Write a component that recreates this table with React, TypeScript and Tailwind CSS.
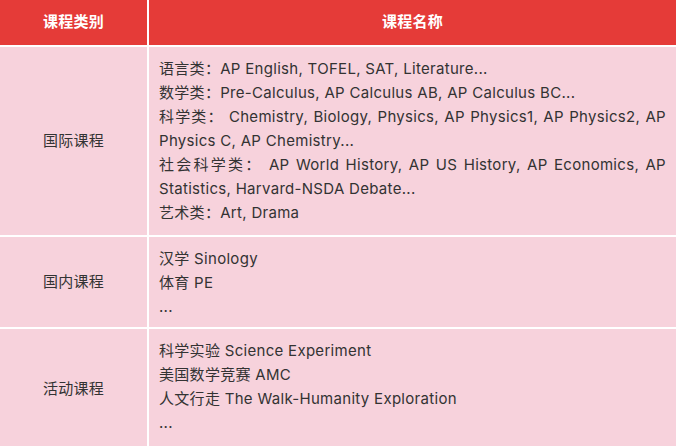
import { Fragment } from 'react';

const rows = [
  {
    name: '国际课程',
    lines: [
      '语言类：AP English, TOFEL, SAT, Literature...',
      '数学类：Pre-Calculus, AP Calculus AB, AP Calculus BC...',
      '科学类： Chemistry, Biology, Physics, AP Physics1, AP Physics2, AP Physics C, AP Chemistry...',
      '社会科学类： AP World History, AP US History, AP Economics, AP Statistics, Harvard-NSDA Debate...',
      '艺术类：Art, Drama',
    ],
    h: 'h-[188px]',
  },
  {
    name: '国内课程',
    lines: ['汉学 Sinology', '体育 PE', '...'],
    h: 'h-[90px]',
  },
  {
    name: '活动课程',
    lines: ['科学实验 Science Experiment', '美国数学竞赛 AMC', '人文行走 The Walk-Humanity Exploration', '...'],
    h: 'h-[120px]',
  },
];

export default function App() {
  return (
    <div lang="zh-CN" className="w-[677px] h-[446px] overflow-hidden bg-white font-['Inter','Noto_Sans_CJK_SC',sans-serif] text-[15px] tracking-[0.3px] text-[#333]">
      <div className="grid grid-cols-[147px_527px] gap-[2px]">
        {/* header */}
        <div className="h-[45px] bg-[#e53b38] flex items-center justify-center text-white font-bold">课程类别</div>
        <div className="h-[45px] bg-[#e53b38] flex items-center justify-center text-white font-bold">课程名称</div>

        {rows.map((r) => (
          <Fragment key={r.name}>
            <div className={`${r.h} bg-[#f7d2dc] flex items-center justify-center`}>
              {r.name}
            </div>
            <div className={`${r.h} bg-[#f7d2dc] px-[10px] pt-[10px] leading-[24px] text-justify`}>
              {r.lines.map((l, i) => (
                <p key={i}>{l}</p>
              ))}
            </div>
          </Fragment>
        ))}
      </div>
    </div>
  );
}
